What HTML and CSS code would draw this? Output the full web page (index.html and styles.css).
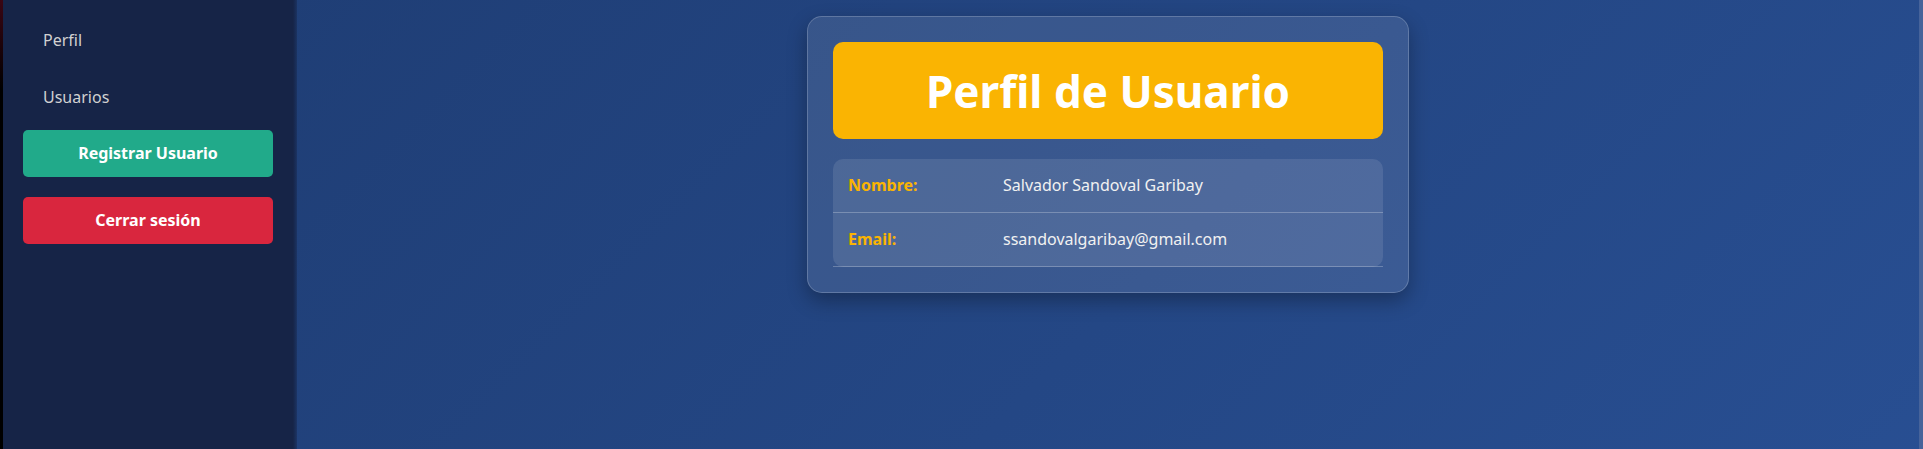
FILE: index.html
```html
<!DOCTYPE html>
<html lang="es">
<head>
<meta charset="utf-8">
<title>Perfil de Usuario</title>
<link rel="stylesheet" href="styles.css">
</head>
<body>
<div class="app">
  <aside class="sidebar">
    <nav class="menu">
      <a class="menu-link" href="#perfil">Perfil</a>
      <a class="menu-link" href="#usuarios">Usuarios</a>
    </nav>
    <div class="actions">
      <button class="btn btn-register" type="button">Registrar Usuario</button>
      <button class="btn btn-logout" type="button">Cerrar sesión</button>
    </div>
  </aside>
  <main class="content">
    <section class="card">
      <h1 class="card-title">Perfil de Usuario</h1>
      <table class="info">
        <tbody>
          <tr><th scope="row">Nombre:</th><td>Salvador Sandoval Garibay</td></tr>
          <tr><th scope="row">Email:</th><td>ssandovalgaribay@gmail.com</td></tr>
        </tbody>
      </table>
    </section>
  </main>
</div>
</body>
</html>
```
FILE: styles.css
```css
* {
  box-sizing: border-box;
}

body {
  margin: 0;
  font-family: "Noto Sans", sans-serif;
  font-size: 16px;
  line-height: 23px;
  color: #f1f1f1;
  background: #000;
}

.app {
  display: flex;
  min-height: 100vh;
  padding-left: 3px;
  padding-right: 4px;
  background:
    linear-gradient(#46639a, #46639a) right / 4px 100% no-repeat,
    linear-gradient(#3a0614, #000 90px) left / 3px 100% no-repeat,
    linear-gradient(135deg, #1e3c72, #2a5298 120%);
}

.sidebar {
  flex: 0 0 294px;
  padding: 16px 24px 20px 20px;
  background: linear-gradient(90deg, #162447 290px, transparent 297px);
}

.menu {
  display: flex;
  flex-direction: column;
  gap: 10px;
  margin-bottom: 10px;
}

.menu-link {
  padding: 13px 20px 11px;
  color: #d1d1d1;
  text-decoration: none;
}

.actions {
  display: flex;
  flex-direction: column;
  gap: 20px;
}

.btn {
  padding: 12px 20px;
  border: 0;
  border-radius: 5px;
  font: inherit;
  font-weight: 700;
  color: #fff;
  cursor: pointer;
}

.btn-register {
  background: #21aa8a;
}

.btn-logout {
  background: #d9263e;
}

.content {
  flex: 1;
  padding: 16px 20px;
}

.card {
  max-width: 602px;
  margin: 0 auto;
  padding: 25px;
  border: 1px solid rgba(255, 255, 255, 0.2);
  border-radius: 15px;
  background: rgba(255, 255, 255, 0.1);
  box-shadow: 0 8px 20px rgba(0, 0, 0, 0.3);
}

.card-title {
  margin: 0 0 20px;
  padding: 19px 18px 17px;
  border-radius: 10px;
  font-size: 44px;
  line-height: 61px;
  text-align: center;
  color: #fff;
  background: #fab402;
}

.info {
  width: 100%;
  table-layout: fixed;
  border-spacing: 0;
  border-radius: 10px;
  background: rgba(255, 255, 255, 0.1);
}

.info th,
.info td {
  padding: 15px;
  border-bottom: 1px solid rgba(255, 255, 255, 0.25);
  text-align: left;
}

.info th {
  width: 155px;
  color: #fab402;
}
```
